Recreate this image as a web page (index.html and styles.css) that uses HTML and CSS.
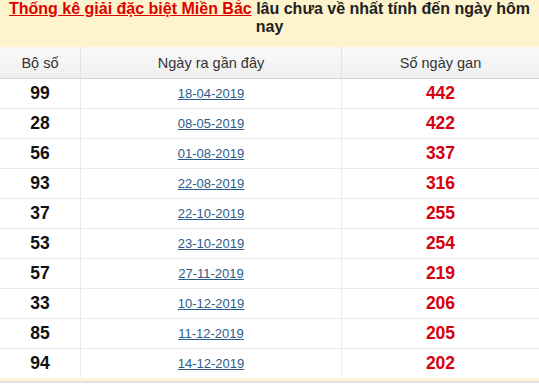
FILE: index.html
```html
<!DOCTYPE html>
<html lang="vi">
<head>
<meta charset="utf-8">
<link rel="stylesheet" href="styles.css">
</head>
<body>
<div class="box">
  <h2 class="title"><a href="#" class="title-link">Thống kê giải đặc biệt Miền Bắc</a> lâu chưa về nhất tính đến ngày hôm nay</h2>
  <table class="gan">
    <thead>
      <tr><th class="c1">Bộ số</th><th class="c2">Ngày ra gần đây</th><th class="c3">Số ngày gan</th></tr>
    </thead>
    <tbody>
      <tr><td class="num">99</td><td class="date"><a href="#">18-04-2019</a></td><td class="gap">442</td></tr>
      <tr><td class="num">28</td><td class="date"><a href="#">08-05-2019</a></td><td class="gap">422</td></tr>
      <tr><td class="num">56</td><td class="date"><a href="#">01-08-2019</a></td><td class="gap">337</td></tr>
      <tr><td class="num">93</td><td class="date"><a href="#">22-08-2019</a></td><td class="gap">316</td></tr>
      <tr><td class="num">37</td><td class="date"><a href="#">22-10-2019</a></td><td class="gap">255</td></tr>
      <tr><td class="num">53</td><td class="date"><a href="#">23-10-2019</a></td><td class="gap">254</td></tr>
      <tr><td class="num">57</td><td class="date"><a href="#">27-11-2019</a></td><td class="gap">219</td></tr>
      <tr><td class="num">33</td><td class="date"><a href="#">10-12-2019</a></td><td class="gap">206</td></tr>
      <tr><td class="num">85</td><td class="date"><a href="#">11-12-2019</a></td><td class="gap">205</td></tr>
      <tr><td class="num">94</td><td class="date"><a href="#">14-12-2019</a></td><td class="gap">202</td></tr>
    </tbody>
  </table>
  <div class="foot"></div>
</div>
</body>
</html>
```
FILE: styles.css
```css
html, body {
  margin: 0;
  padding: 0;
  background: #fff;
}
.box {
  width: 539px;
  font-family: "Liberation Sans", Arial, sans-serif;
  background: #fdf3cc;
}
.title {
  margin: 0;
  padding: 0 0 11px;
  font-size: 16px;
  line-height: 18px;
  font-weight: bold;
  text-align: center;
  color: #222;
}
.title-link {
  color: #e00000;
  text-decoration: underline;
}
.gan {
  width: 100%;
  border-collapse: collapse;
  background: #fff;
}
.gan th {
  height: 31px;
  padding: 0;
  font-size: 14.5px;
  font-weight: normal;
  color: #333;
  background: linear-gradient(#f9f9f9, #efefef);
  border-bottom: 1px solid #d8d8d8;
  border-left: 1px solid #e2e2e2;
}
.gan th:first-child, .gan td:first-child {
  border-left: none;
}
.c1 { width: 80px; }
.c2 { width: 260px; }
.gan td {
  height: 29px;
  padding: 0;
  text-align: center;
  border-top: 1px solid #eaeaea;
  border-left: 1px solid #ececec;
}
.gan tbody tr:first-child td {
  border-top: none;
}
.num {
  font-size: 17.5px;
  font-weight: bold;
  color: #111;
}
.date {
  font-size: 13px;
}
.date a {
  color: #2c5b8c;
  text-decoration: underline;
}
.gap {
  font-size: 17.5px;
  font-weight: bold;
  color: #d6000f;
}
.foot {
  height: 2px;
  border-top: 1px solid #f7f2e6;
  border-bottom: 2px solid #e4e0ea;
}
```
